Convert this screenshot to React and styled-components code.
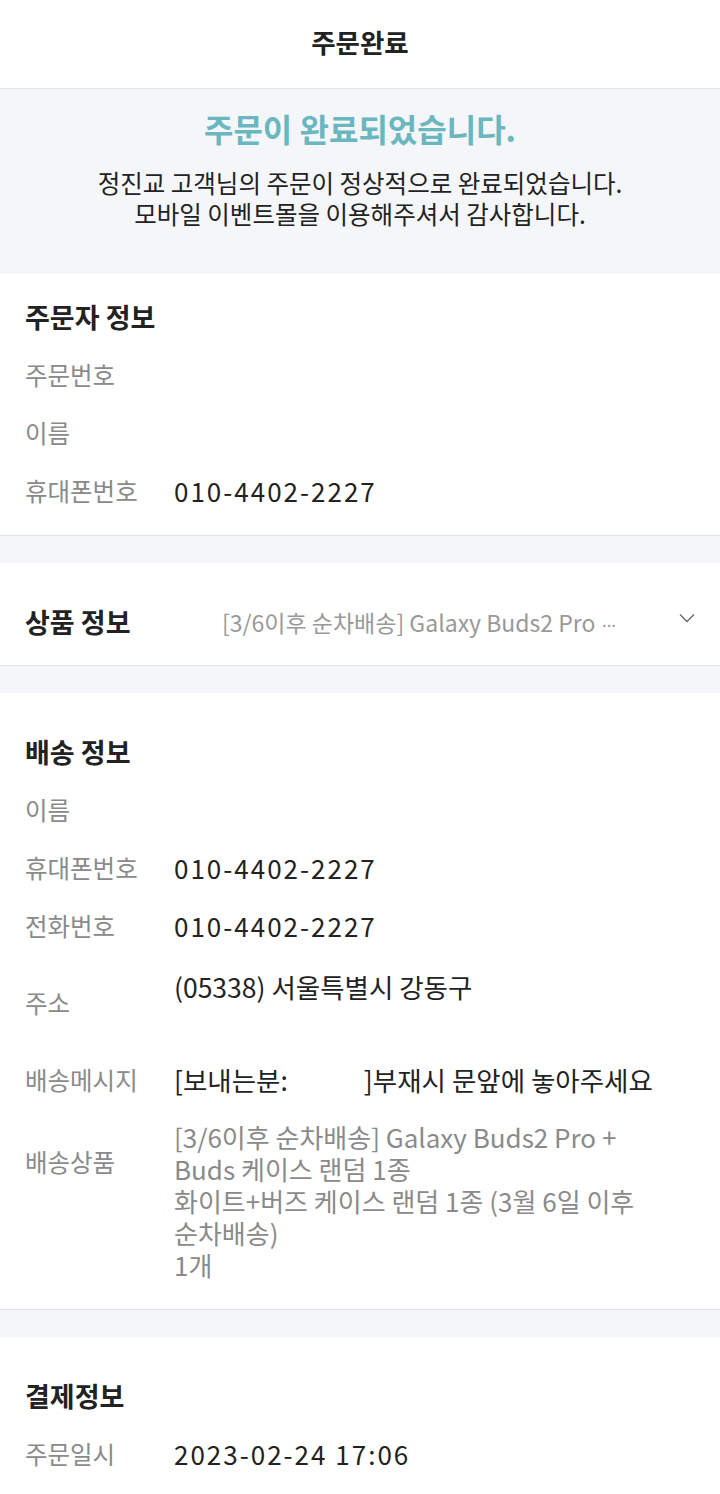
import React from "react";
import styled, { createGlobalStyle } from "styled-components";

const GlobalStyle = createGlobalStyle`
  * {
    box-sizing: border-box;
  }

  body {
    margin: 0;
    background: #f5f6fa;
    font-family: "Noto Sans CJK KR", "Noto Sans", sans-serif;
    color: #222;
  }
`;

const Page = styled.div`
  width: 720px;
  min-height: 1494px;
  background: #f5f6fa;
`;

const Header = styled.header`
  height: 89px;
  padding-bottom: 6px;
  display: flex;
  align-items: center;
  justify-content: center;
  background: #fff;
  border-bottom: 1px solid #e2e4e8;
`;

const HeaderTitle = styled.h1`
  margin: 0;
  font-size: 26.5px;
  font-weight: 700;
  color: #222;
`;

const Banner = styled.div`
  padding: 19px 0 45px;
  text-align: center;
  background: #f4f6f9;
`;

const BannerTitle = styled.h2`
  margin: 0 0 19px;
  font-size: 32px;
  line-height: 40px;
  font-weight: 700;
  color: #6ab7c0;
`;

const BannerText = styled.p`
  margin: 0;
  font-size: 24.5px;
  line-height: 31px;
  color: #222;
`;

const Section = styled.section`
  margin-top: ${({ $gap }) => ($gap ? "27px" : "0")};
  padding: ${({ $top }) => $top}px 25px ${({ $bottom }) => $bottom}px;
  background: #fff;
  border-bottom: 1px solid #e2e4e8;
`;

const SectionTitle = styled.h3`
  margin: 0 0 ${({ $inline }) => ($inline ? "0" : "14px")};
  flex: ${({ $inline }) => ($inline ? "0 0 197px" : "none")};
  font-size: 27px;
  line-height: 30px;
  font-weight: 700;
  color: #222;
`;

const Row = styled.div`
  display: flex;
  align-items: ${({ $alignTop }) => ($alignTop ? "flex-start" : "center")};
  min-height: 58px;
  padding: ${({ $pad }) => $pad || "0"};
`;

const Label = styled.div`
  flex: 0 0 149px;
  margin-top: ${({ $offset }) => $offset || 0}px;
  font-size: 24.5px;
  line-height: 32px;
  color: #8a8a8a;
`;

const Value = styled.div`
  flex: 1;
  font-size: ${({ $numeric, $muted }) => ($numeric ? "26px" : $muted ? "26px" : "26.5px")};
  letter-spacing: ${({ $numeric }) => ($numeric ? "2px" : "0")};
  line-height: 32px;
  color: ${({ $muted }) => ($muted ? "#8a8a8a" : "#222")};
`;

const Line = styled.div`
  min-height: 32px;
  white-space: nowrap;
`;

const Redacted = styled.span`
  display: inline-block;
  width: 76px;
`;

const ProductRow = styled.div`
  display: flex;
  align-items: center;
  height: 30px;
`;

const ProductName = styled.div`
  flex: 1;
  min-width: 0;
  height: 30px;
  font-size: 23px;
  line-height: 30px;
  color: #999;
  white-space: nowrap;
`;

const Dots = styled.span`
  margin-left: 6px;
  font-family: "DejaVu Sans", sans-serif;
  font-size: 18px;
  line-height: 1;
  letter-spacing: -1px;
`;

const ChevronIcon = styled.svg`
  flex: none;
  margin-left: 20px;
  margin-bottom: 8px;
`;

const Chevron = () => (
  <ChevronIcon width="16" height="10" viewBox="0 0 16 10">
    <path d="M1 1.5 L8 8.5 L15 1.5" fill="none" stroke="#666" strokeWidth="1.3" />
  </ChevronIcon>
);

const App = () => (
  <Page>
    <GlobalStyle />
    <Header>
      <HeaderTitle>주문완료</HeaderTitle>
    </Header>

    <Banner>
      <BannerTitle>주문이 완료되었습니다.</BannerTitle>
      <BannerText>정진교 고객님의 주문이 정상적으로 완료되었습니다.</BannerText>
      <BannerText>모바일 이벤트몰을 이용해주셔서 감사합니다.</BannerText>
    </Banner>

    <Section $top={28} $bottom={15}>
      <SectionTitle>주문자 정보</SectionTitle>
      <Row>
        <Label>주문번호</Label>
        <Value />
      </Row>
      <Row>
        <Label>이름</Label>
        <Value />
      </Row>
      <Row>
        <Label>휴대폰번호</Label>
        <Value $numeric>010-4402-2227</Value>
      </Row>
    </Section>

    <Section $gap $top={44} $bottom={28}>
      <ProductRow>
        <SectionTitle $inline>상품 정보</SectionTitle>
        <ProductName>
          [3/6이후 순차배송] Galaxy Buds2 Pro<Dots>···</Dots>
        </ProductName>
        <Chevron />
      </ProductRow>
    </Section>

    <Section $gap $top={44} $bottom={28}>
      <SectionTitle>배송 정보</SectionTitle>
      <Row>
        <Label>이름</Label>
        <Value />
      </Row>
      <Row>
        <Label>휴대폰번호</Label>
        <Value $numeric>010-4402-2227</Value>
      </Row>
      <Row>
        <Label>전화번호</Label>
        <Value $numeric>010-4402-2227</Value>
      </Row>
      <Row $pad="16px 0">
        <Label>주소</Label>
        <Value>
          <Line>(05338) 서울특별시 강동구</Line>
          <Line />
        </Value>
      </Row>
      <Row>
        <Label>배송메시지</Label>
        <Value>
          [보내는분:<Redacted />]부재시 문앞에 놓아주세요
        </Value>
      </Row>
      <Row $alignTop $pad="12px 0 0">
        <Label $offset={25}>배송상품</Label>
        <Value $muted>
          <Line>[3/6이후 순차배송] Galaxy Buds2 Pro +</Line>
          <Line>Buds 케이스 랜덤 1종</Line>
          <Line>화이트+버즈 케이스 랜덤 1종 (3월 6일 이후</Line>
          <Line>순차배송)</Line>
          <Line>1개</Line>
        </Value>
      </Row>
    </Section>

    <Section $gap $top={44} $bottom={28}>
      <SectionTitle>결제정보</SectionTitle>
      <Row>
        <Label>주문일시</Label>
        <Value $numeric>2023-02-24 17:06</Value>
      </Row>
    </Section>
  </Page>
);

export default App;
